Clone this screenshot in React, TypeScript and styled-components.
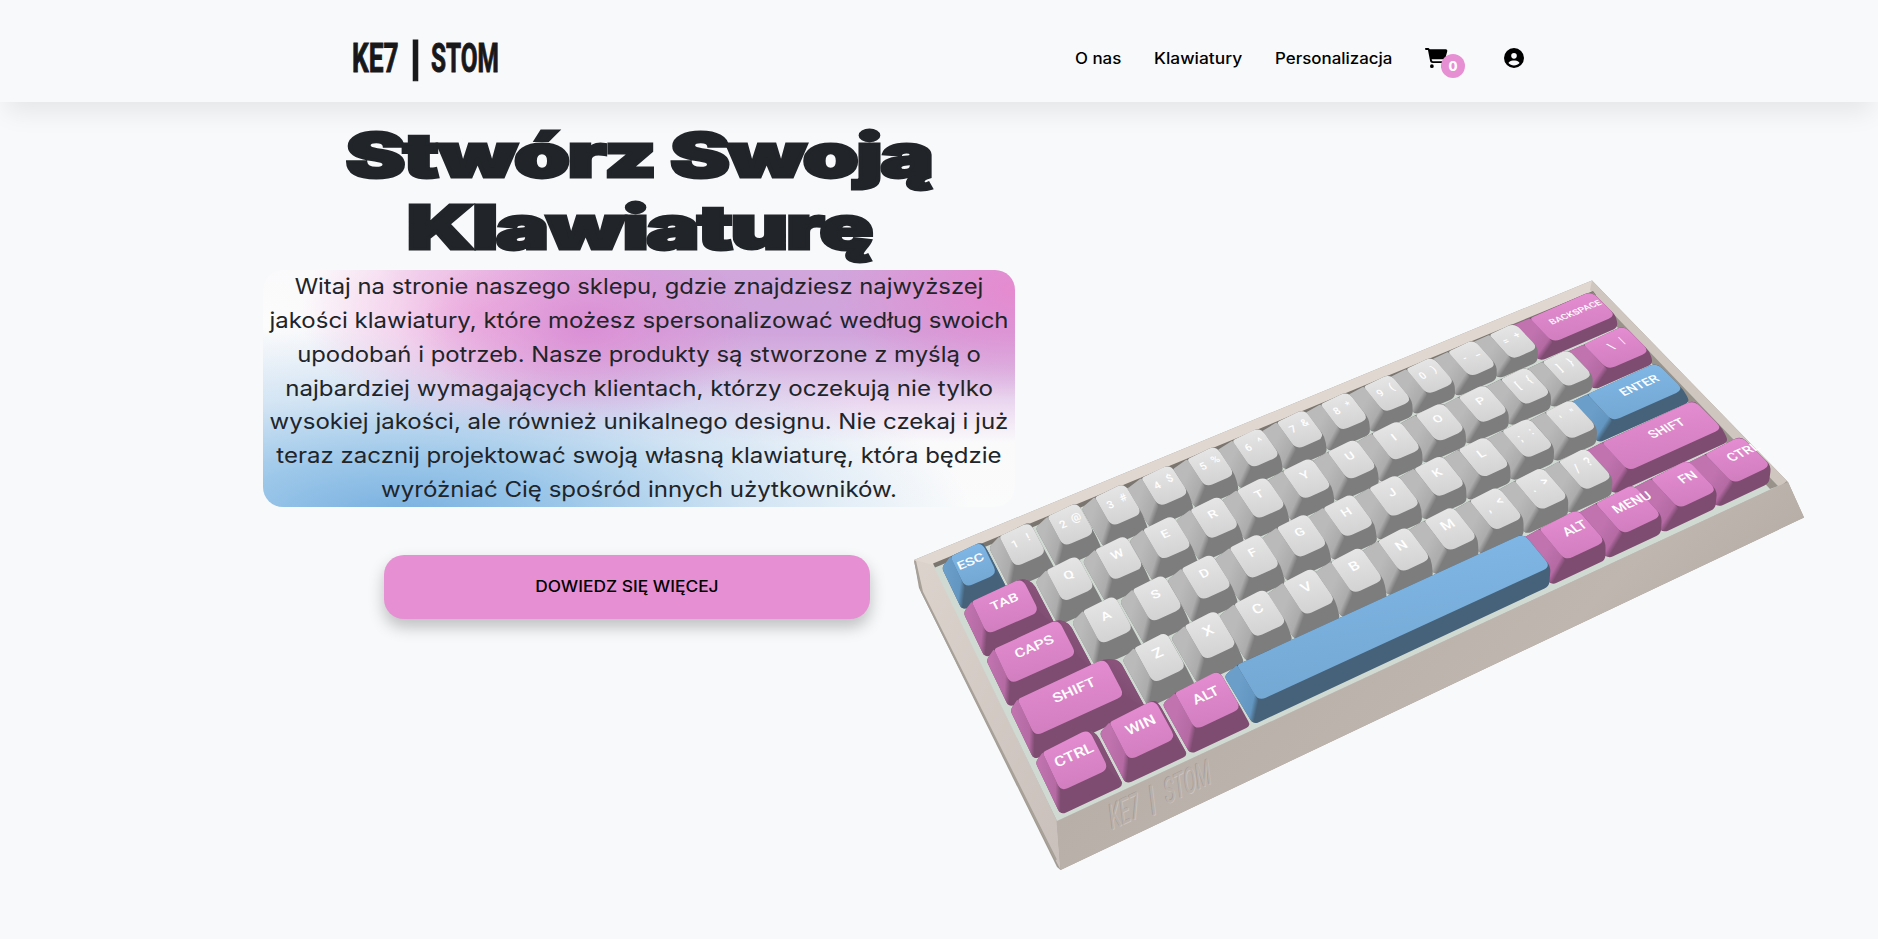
import React from "react";
import styled, { createGlobalStyle } from "styled-components";
import { FaCartShopping, FaCircleUser } from "react-icons/fa6";

const GlobalStyle = createGlobalStyle`
  * { box-sizing: border-box; }
  body {
    margin: 0;
    background: #f8f9fb;
    color: #212529;
    font-family: Inter, "Liberation Sans", sans-serif;
    overflow: hidden;
  }
`;

const Page = styled.div`
  height: 939px;
  overflow: hidden;
`;

const Header = styled.header`
  position: relative;
  height: 102px;
  padding: 14px 354px 0 352px;
  display: flex;
  align-items: center;
  justify-content: space-between;
  background: #f8f9fb;
  box-shadow: 0 16px 24px -6px rgba(0, 0, 0, 0.08);
`;

const Logo = styled.a`
  display: flex;
  width: 146px;
  height: 44px;
  margin-top: -1px;
  color: #18181a;
  font: 700 41px/44px "Roboto", sans-serif;
  -webkit-text-stroke: 1px #18181a;
  white-space: pre;
`;

const LogoPart = styled.span<{ $width: number; $scale: string }>`
  width: ${(p) => p.$width}px;
  transform: scale(${(p) => p.$scale});
  transform-origin: left center;
`;

const Nav = styled.nav`
  display: flex;
  align-items: center;
  height: 24px;
  color: #000;
`;

const NavLink = styled.a<{ $scale: number; $width: number }>`
  width: ${(p) => p.$width}px;
  margin-right: 33px;
  padding-top: 1px;
  font-size: 15.5px;
  line-height: 24px;
  font-weight: 500;
  transform: scaleX(${(p) => p.$scale});
  transform-origin: left center;
  white-space: nowrap;
`;

const CartLink = styled.a`
  position: relative;
  display: flex;
  width: 23px;
  margin-right: 56px;
`;

const CartIcon = styled(FaCartShopping)`
  flex: none;
  width: 22.5px;
  height: 20px;
`;

const CartBadge = styled.span`
  position: absolute;
  left: 16px;
  top: 6px;
  width: 24px;
  height: 24px;
  border-radius: 50%;
  background: #e78fd3;
  color: #fff;
  font-size: 13px;
  line-height: 24px;
  font-weight: 800;
  text-align: center;
`;

const Hero = styled.main`
  display: flex;
  align-items: flex-start;
  padding-left: 263px;
`;

const Intro = styled.section`
  width: 752px;
  flex: none;
  padding-top: 17px;
`;

const Title = styled.h1`
  margin: 0;
  height: 151px;
  display: flex;
  flex-direction: column;
  align-items: center;
  font-size: 60px;
  line-height: 72px;
  font-weight: 900;
  letter-spacing: -1.5px;
  -webkit-text-stroke: 3px #212529;
  white-space: nowrap;
`;

const TitleLine = styled.span<{ $scale: number }>`
  transform: scaleX(${(p) => p.$scale});
`;

const Lead = styled.p`
  margin: 0;
  height: 237px;
  border-radius: 20px;
  font-size: 21.5px;
  line-height: 33.85px;
  text-align: center;
  background:
    radial-gradient(ellipse 24% 46% at 100% 8%, #e68ad0 0%, rgba(230, 138, 208, 0) 100%),
    radial-gradient(ellipse 22% 42% at 43% 24%, rgba(218, 140, 212, 0.9) 0%, rgba(222, 146, 214, 0.5) 50%, rgba(226, 150, 215, 0) 100%),
    radial-gradient(ellipse 24% 48% at 29% 18%, rgba(240, 178, 224, 0.95) 0%, rgba(241, 186, 228, 0.6) 45%, rgba(244, 200, 232, 0) 100%),
    radial-gradient(ellipse 76% 82% at 18% 104%, #78b0e0 0%, rgba(140, 190, 230, 0.85) 30%, rgba(170, 206, 236, 0.5) 62%, rgba(190, 215, 240, 0) 100%),
    radial-gradient(ellipse 40% 90% at 0% 22%, #fcfcfc 0%, rgba(252, 252, 252, 0.95) 45%, rgba(252, 252, 252, 0) 100%),
    linear-gradient(180deg, #d0a6dc 0%, #d0a4dc 26%, #dabae4 42%, #efe0f3 60%, #fafafb 73%, #fafbfb 100%);
`;

const LeadLine = styled.span<{ $scale: number }>`
  display: block;
  transform: scaleX(${(p) => p.$scale});
  white-space: nowrap;
`;

const MoreButton = styled.button`
  display: block;
  width: 486px;
  height: 64px;
  margin: 48px 0 0 121px;
  border: 0;
  border-radius: 20px;
  background: #e78fd3;
  color: #000;
  box-shadow: 0 8px 16px rgba(0, 0, 0, 0.24);
  font: 500 15.5px/24px Inter, sans-serif;
`;

const ButtonLabel = styled.span`
  display: inline-block;
  transform: scaleX(1.12);
`;

const Keyboard = styled.svg`
  flex: none;
  width: 920px;
  height: 630px;
  margin: 158px 0 0 -115px;
`;

/* ---------- keyboard geometry ---------- */

type Pt = [number, number];
type Tone = "grey" | "pink" | "blue";
type Key = { w: number; label: string; tone: Tone; size: number; shift: number };

/** Perspective map that sends the rectangle u0..u1 × v0..v1 to a quad. */
function project(u0: number, v0: number, u1: number, v1: number, q: [Pt, Pt, Pt, Pt]) {
  const [[x0, y0], [x1, y1], [x2, y2], [x3, y3]] = q;
  const dx1 = x1 - x2, dx2 = x3 - x2, sx = x0 - x1 + x2 - x3;
  const dy1 = y1 - y2, dy2 = y3 - y2, sy = y0 - y1 + y2 - y3;
  const det = dx1 * dy2 - dx2 * dy1;
  const g = (sx * dy2 - dx2 * sy) / det;
  const h = (dx1 * sy - sx * dy1) / det;
  return (u: number, v: number): Pt => {
    const s = (u - u0) / (u1 - u0);
    const t = (v - v0) / (v1 - v0);
    const w = g * s + h * t + 1;
    return [
      ((x1 - x0 + g * x1) * s + (x3 - x0 + h * x3) * t + x0) / w,
      ((y1 - y0 + g * y1) * s + (y3 - y0 + h * y3) * t + y0) / w,
    ];
  };
}

const base = project(0, 0, 15, 5, [[940, 567], [1586, 293], [1771, 484], [1060, 817]]);
const cap = project(0.19, 0.15, 14.81, 4.92, [[950, 553], [1593, 289], [1772, 466], [1062, 791]]);

const f = (n: number) => n.toFixed(1);

/** Closed path through the points; corner i is rounded by radii[i]. */
function rounded(pts: Pt[], radii: number[]): string {
  const n = pts.length;
  return (
    pts
      .map((p, i) => {
        const a = pts[(i + n - 1) % n];
        const b = pts[(i + 1) % n];
        const cut = (q: Pt): Pt => {
          const d = Math.hypot(q[0] - p[0], q[1] - p[1]) || 1;
          const r = Math.min(radii[i], d / 2.2) / d;
          return [p[0] + (q[0] - p[0]) * r, p[1] + (q[1] - p[1]) * r];
        };
        const s = cut(a);
        const e = cut(b);
        return `${i ? "L" : "M"}${f(s[0])} ${f(s[1])}Q${f(p[0])} ${f(p[1])} ${f(e[0])} ${f(e[1])}`;
      })
      .join("") + "Z"
  );
}

const g = (label: string, size = 11.5): Key => ({ w: 1, label, tone: "grey", size, shift: 0 });
const k = (w: number, label: string, tone: Tone = "pink", size = 12, shift = 0): Key => ({ w, label, tone, size, shift });

const rows: Key[][] = [
  [k(1, "ESC", "blue", 12, -0.03), ..."1! 2@ 3# 4$ 5% 6^ 7& 8* 9( 0) -_ =+".split(" ").map((s) => g(s)), k(2, "BACKSPACE", "pink", 9.4, 0.08)],
  [k(1.5, "TAB", "pink", 12, -0.04), ..."QWERTYUIOP".split("").map((s) => g(s)), g("[{", 12), g("]}", 12), k(1.5, "\\|", "pink", 12)],
  [k(1.75, "CAPS", "pink", 12, -0.04), ..."ASDFGHJKL".split("").map((s) => g(s)), g(";:", 12), g("'\"", 12), k(2.25, "ENTER", "blue", 12, 0.07)],
  [k(2.25, "SHIFT"), ..."ZXCVBNM".split("").map((s) => g(s, 12.5)), g(",<", 13), g(".>", 13), g("/?", 13), k(2.75, "SHIFT", "pink", 12, 0.08)],
  [
    k(1.25, "CTRL"), k(1.25, "WIN"), k(1.25, "ALT"), k(6.25, "", "blue"),
    k(1.25, "ALT", "pink", 12, 0.12), k(1.25, "MENU", "pink", 12, 0.14),
    k(1.25, "FN", "pink", 12, 0.16), k(1.25, "CTRL", "pink", 12, 0.2),
  ],
];

const frontFill: Record<Tone, string> = { grey: "#7d7d7d", pink: "#7d4c70", blue: "#45627a" };
const leftFill: Record<Tone, [string, string]> = {
  grey: ["#acacac", "#bababa"],
  pink: ["#b56aa4", "#c073af"],
  blue: ["#6397c2", "#6b9fca"],
};

/** Distance from a key's right edge to the right edge of its top face. */
const rightInset = (w: number) => {
  if (w > 6) return 0.14;
  if (w >= 2.25) return 0.38;
  if (w === 2) return 0.26;
  if (w >= 1.5) return 0.3;
  return w > 1 ? 0.2 : 0.18;
};

const Keycap = ({ id, u, v, data }: { id: string; u: number; v: number; data: Key }) => {
  const { w, label, tone, size, shift } = data;
  const m = 0.025;
  const bBL = base(u + m, v + m);
  const bBR = base(u + w - m, v + m);
  const bFR = base(u + w - m, v + 1 - m);
  const bFL = base(u + m, v + 1 - m);
  const il = label ? 0.17 : 0.13;
  const ir = rightInset(w);
  const tBL = cap(u + il, v + 0.22);
  const tBR = cap(u + w - ir, v + 0.18);
  const tFR = cap(u + w - ir, v + 0.91);
  const tFL = cap(u + il, v + 0.92);
  const cross =
    (bBR[0] - bFR[0]) * (tFR[1] - bFR[1]) - (bBR[1] - bFR[1]) * (tFR[0] - bFR[0]);
  const rightVisible = cross < 0;
  const silhouette: Pt[] = rightVisible
    ? [bBL, bFL, bFR, bBR, tBR, tBL]
    : [bBL, bFL, bFR, tFR, tBR, tBL];

  /* The left face darkens over a few pixels before it turns into the front. */
  const ex = tFL[0] - bFL[0];
  const ey = tFL[1] - bFL[1];
  const len = Math.hypot(ex, ey);
  const nx = ey / len;
  const ny = -ex / len;
  const mid: Pt = [(tFL[0] + bFL[0]) / 2, (tFL[1] + bFL[1]) / 2];

  const cu = u + w / 2 + shift;
  const cv = v + 0.5;
  const c = cap(cu, cv);
  const e = cap(cu + 0.1, cv);
  const d = cap(cu, cv + 0.1);
  const unit = 52;
  const pair = label.length === 2 && label !== "FN";
  const mat = [
    ((e[0] - c[0]) * 10) / unit, ((e[1] - c[1]) * 10) / unit,
    ((d[0] - c[0]) * 10) / unit, ((d[1] - c[1]) * 10) / unit, c[0], c[1],
  ].map((n) => n.toFixed(3)).join(" ");

  return (
    <g>
      <linearGradient
        id={id}
        gradientUnits="userSpaceOnUse"
        x1={f(mid[0])}
        y1={f(mid[1])}
        x2={f(mid[0] + nx * 22)}
        y2={f(mid[1] + ny * 22)}
      >
        <stop offset="0" stopColor={frontFill[tone]} />
        <stop offset="0.25" stopColor={leftFill[tone][0]} />
        <stop offset="1" stopColor={leftFill[tone][1]} />
      </linearGradient>
      <path d={rounded(silhouette, rightVisible ? [4, 6, 5, 5, 7, 4] : [4, 6, 5, 6, 7, 4])} fill={frontFill[tone]} />
      {rightVisible && <path d={rounded([bFR, bBR, tBR, tFR], [5, 5, 7, 3])} fill={`url(#${tone}-right)`} />}
      <path d={rounded([bBL, bFL, tFL, tBL], [4, 6, 2, 1.5])} fill={`url(#${id})`} />
      <path d={rounded([tBL, tFL, tFR, tBR], [3, 8, 8, 8])} fill={`url(#${tone}-top)`} />
      {label && (
        <g
          transform={`matrix(${mat})`}
          fill="#fff"
          fontFamily="Roboto, sans-serif"
          fontWeight={500}
          fontSize={size}
          textAnchor="middle"
        >
          {pair ? (
            <>
              <text x={-7} y={3.5}>{label[0]}</text>
              <text x={8} y={1.5}>{label[1]}</text>
            </>
          ) : (
            <text y={2.5} transform="scale(1.25 1)">{label}</text>
          )}
        </g>
      )}
    </g>
  );
};

const toneStops: Record<Tone, { top: string[]; right: string[] }> = {
  grey: { top: ["#e6e6e6", "#d2d2d2"], right: ["#7d7d7d", "#707070"] },
  pink: { top: ["#e58dd2", "#d07dbe"], right: ["#7d4c70", "#8f5681"] },
  blue: { top: ["#80b7e6", "#73a7d2"], right: ["#45627a", "#4d7090"] },
};

const KeyboardArt = () => (
  <Keyboard viewBox="900 260 920 630" role="img" aria-label="Klawiatura">
    <defs>
      {(Object.keys(toneStops) as Tone[]).map((t) => (
        <React.Fragment key={t}>
          <linearGradient id={`${t}-top`} x1="0.4" y1="0" x2="0.6" y2="1">
            <stop offset="0" stopColor={toneStops[t].top[0]} />
            <stop offset="1" stopColor={toneStops[t].top[1]} />
          </linearGradient>
          <linearGradient id={`${t}-right`} x1="0" y1="1" x2="0.6" y2="0">
            <stop offset="0.3" stopColor={toneStops[t].right[0]} />
            <stop offset="1" stopColor={toneStops[t].right[1]} />
          </linearGradient>
        </React.Fragment>
      ))}
      <linearGradient id="case-front" x1="0" y1="0" x2="1" y2="0.5">
        <stop offset="0" stopColor="#c8bfba" />
        <stop offset="0.25" stopColor="#b6ada7" />
        <stop offset="0.7" stopColor="#c0b6b0" />
        <stop offset="1" stopColor="#aca69e" />
      </linearGradient>
      <linearGradient id="case-left" x1="0" y1="0" x2="1" y2="1">
        <stop offset="0" stopColor="#dcd3cd" />
        <stop offset="1" stopColor="#c9c0bb" />
      </linearGradient>
    </defs>
    <path d="M914 560L1592 280.4L1788 482L1804 517.5L1060.5 870L1057 867L919 588L914 560Z" fill="#a19a92" />
    <path d="M914 560L1592 280.4L1598 295L934 568Z" fill="#e0d7d0" />
    <path d="M1592 280.4L1787 481L1778 488L1590 290Z" fill="#cfc6bf" />
    <path d="M914.5 560L934 565L1057 821L1060.5 870L922 592Z" fill="url(#case-left)" />
    <path d="M915 561L922 592L1056 860" fill="none" stroke="#a8a199" strokeWidth="2" />
    <path d="M1056.5 821L1778 486L1788 482L1804 517.5L1060.5 870Z" fill="url(#case-front)" />
    <path d="M933 565L1593 292.5L1778 486L1057 821Z" fill="#d0dad2" />
    <path d="M933 563.5L1593 291L1596 295L935 567.5Z" fill="#7b756f" />
    <path d="M1593 292.5L1778 486L1770 489L1586 294Z" fill="#98928a" />

    {rows.map((row, v) => {
      let u = 0;
      const placed = row.map((data) => {
        const at = u;
        u += data.w;
        return { at, data };
      });
      return placed
        .reverse()
        .map(({ at, data }) => (
          <Keycap key={`${v}-${at}`} id={`side-${v}-${at * 100}`} u={at} v={v} data={data} />
        ));
    })}

    {[
      { dx: -0.7, dy: -0.3, fill: "#a29a94" },
      { dx: 0.7, dy: 0.7, fill: "#cdc4bf" },
      { dx: 0, dy: 0, fill: "#b9b0aa" },
    ].map(({ dx, dy, fill }) => (
      <g
        key={fill}
        fill={fill}
        fontFamily="Roboto, sans-serif"
        fontSize="35"
        transform={`matrix(0.9 -0.42 0.12 1 ${1111 + dx} ${830 + dy})`}
      >
        <text textLength="33" lengthAdjust="spacingAndGlyphs">KE7</text>
        <text x="43">|</text>
        <text x="61" textLength="51" lengthAdjust="spacingAndGlyphs">STOM</text>
      </g>
    ))}
  </Keyboard>
);

const leadLines: [string, number][] = [
  ["Witaj na stronie naszego sklepu, gdzie znajdziesz najwyższej", 1.106],
  ["jakości klawiatury, które możesz spersonalizować według swoich", 1.115],
  ["upodobań i potrzeb. Nasze produkty są stworzone z myślą o", 1.11],
  ["najbardziej wymagających klientach, którzy oczekują nie tylko", 1.122],
  ["wysokiej jakości, ale również unikalnego designu. Nie czekaj i już", 1.117],
  ["teraz zacznij projektować swoją własną klawiaturę, która będzie", 1.117],
  ["wyróżniać Cię spośród innych użytkowników.", 1.12],
];

export default function App() {
  return (
    <Page>
      <GlobalStyle />
      <Header>
        <Logo>
          <LogoPart $width={57} $scale="0.64, 1">KE7</LogoPart>
          <LogoPart $width={22} $scale="1.25, 1.16">|</LogoPart>
          <LogoPart $width={67} $scale="0.595, 1">STOM</LogoPart>
        </Logo>
        <Nav>
          <NavLink $width={46} $scale={1.09}>O nas</NavLink>
          <NavLink $width={88} $scale={1.12}>Klawiatury</NavLink>
          <NavLink $width={117} $scale={1.09}>Personalizacja</NavLink>
          <CartLink>
            <CartIcon />
            <CartBadge>0</CartBadge>
          </CartLink>
          <FaCircleUser size={20} />
        </Nav>
      </Header>
      <Hero>
        <Intro>
          <Title>
            <TitleLine $scale={1.49}>Stwórz Swoją</TitleLine>
            <TitleLine $scale={1.48}>Klawiaturę</TitleLine>
          </Title>
          <Lead>
            {leadLines.map(([text, scale]) => (
              <LeadLine key={text} $scale={scale}>{text}</LeadLine>
            ))}
          </Lead>
          <MoreButton><ButtonLabel>DOWIEDZ SIĘ WIĘCEJ</ButtonLabel></MoreButton>
        </Intro>
        <KeyboardArt />
      </Hero>
    </Page>
  );
}
